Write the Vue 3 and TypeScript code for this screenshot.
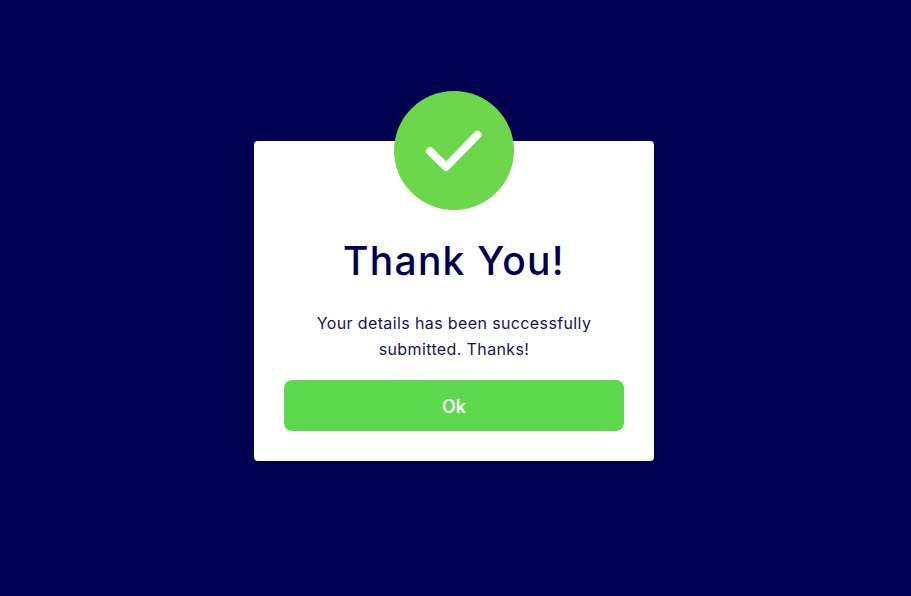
<script setup lang="ts">
const title = 'Thank You!'
</script>

<template>
  <main class="page">
    <section class="card">
      <div class="badge">
        <svg width="60" height="44" viewBox="0 0 60 44" fill="none">
          <path d="M6 23.2 L22 39 L53.5 6.8" stroke="#fff" stroke-width="8" stroke-linecap="round" stroke-linejoin="round" />
        </svg>
      </div>
      <h1 class="title">{{ title }}</h1>
      <p class="text">Your details has been successfully<br />submitted. Thanks!</p>
      <button class="ok" type="button">Ok</button>
    </section>
  </main>
</template>

<style>
html, body { margin: 0; background: #000050; }
</style>

<style scoped>
.page {
  box-sizing: border-box;
  width: 911px;
  height: 596px;
  padding: 141px 0 0 254px;
  background: #000050;
  font-family: Inter, "Noto Sans", sans-serif;
  overflow: hidden;
}
.card {
  box-sizing: border-box;
  width: 400px;
  height: 320px;
  padding: 0 30px 30px;
  background: #fff;
  border-radius: 4px;
  display: flex;
  flex-direction: column;
  align-items: center;
}
.badge {
  width: 120px;
  height: 120px;
  margin-top: -50px;
  border-radius: 50%;
  background: #6dd74c;
  display: flex;
  align-items: center;
  justify-content: center;
}
.badge svg { margin-top: -2px; }
.title {
  margin: 26px 0 0;
  height: 50px;
  color: #000050;
  font-size: 39px;
  line-height: 50px;
  font-weight: 500;
  letter-spacing: 1.25px;
}
.text {
  margin: 24px 0 0;
  color: #15154f;
  font-size: 16px;
  line-height: 26px;
  font-weight: 400;
  letter-spacing: 0.38px;
  text-align: center;
}
.ok {
  margin-top: 18px;
  width: 340px;
  height: 51px;
  padding: 2px 0 0;
  border: 0;
  border-radius: 8px;
  background: #5cd94c;
  color: #fff;
  font-family: inherit;
  font-size: 18px;
  font-weight: 600;
}
</style>
